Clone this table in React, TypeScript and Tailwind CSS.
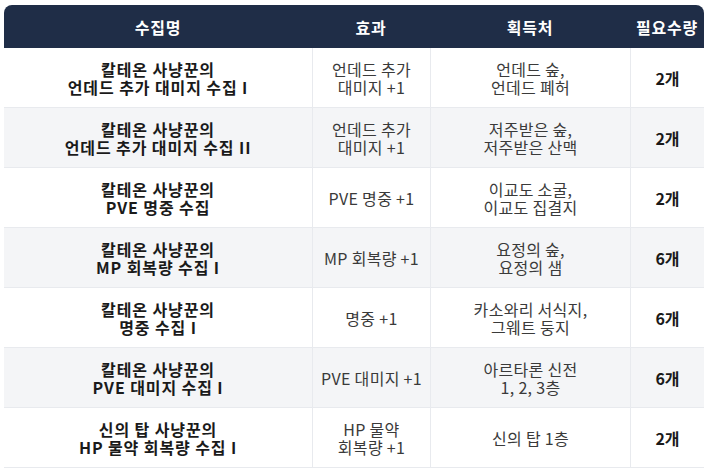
import React from "react";

interface Row {
  name: [string, string];
  effect: string[];
  source: string[];
  count: string;
}

const rows: Row[] = [
  { name: ["칼테온 사냥꾼의", "언데드 추가 대미지 수집 I"], effect: ["언데드 추가", "대미지 +1"], source: ["언데드 숲,", "언데드 폐허"], count: "2개" },
  { name: ["칼테온 사냥꾼의", "언데드 추가 대미지 수집 II"], effect: ["언데드 추가", "대미지 +1"], source: ["저주받은 숲,", "저주받은 산맥"], count: "2개" },
  { name: ["칼테온 사냥꾼의", "PVE 명중 수집"], effect: ["PVE 명중 +1"], source: ["이교도 소굴,", "이교도 집결지"], count: "2개" },
  { name: ["칼테온 사냥꾼의", "MP 회복량 수집 I"], effect: ["MP 회복량 +1"], source: ["요정의 숲,", "요정의 샘"], count: "6개" },
  { name: ["칼테온 사냥꾼의", "명중 수집 I"], effect: ["명중 +1"], source: ["카소와리 서식지,", "그웨트 둥지"], count: "6개" },
  { name: ["칼테온 사냥꾼의", "PVE 대미지 수집 I"], effect: ["PVE 대미지 +1"], source: ["아르타론 신전", "1, 2, 3층"], count: "6개" },
  { name: ["신의 탑 사냥꾼의", "HP 물약 회복량 수집 I"], effect: ["HP 물약", "회복량 +1"], source: ["신의 탑 1층"], count: "2개" },
];

const cols = "grid grid-cols-[308px_118px_200px_74px]";

// one text block per cell, lines split with <br />
const Lines = ({ lines }: { lines: string[] }) => (
  <p>
    {lines.map((l, i) => (
      <React.Fragment key={i}>
        {i > 0 && <br />}
        {l}
      </React.Fragment>
    ))}
  </p>
);

export default function App() {
  return (
    <div className="w-[708px] h-[472px] bg-white pt-[5px] pl-[4px]" style={{ fontFamily: '"Noto Sans CJK KR", "Noto Sans", sans-serif' }}>
      <div className="w-[700px]">
        <div className={`${cols} h-[43px] bg-[#1f2d47] rounded-t-[8px] text-white font-bold text-[16px] tracking-[0.8px]`}>
          <div className="flex items-center justify-center">수집명</div>
          <div className="flex items-center justify-center">효과</div>
          <div className="flex items-center justify-center">획득처</div>
          <div className="flex items-center justify-center">필요수량</div>
        </div>
        {rows.map((r, i) => (
          <div
            key={i}
            className={`${cols} h-[60px] border-b border-[#e8eaee] text-[16px] leading-[18px] text-center ${i % 2 === 1 ? "bg-[#f4f5f7]" : "bg-white"}`}
          >
            <div className="flex items-center justify-center font-bold text-[#1a1a1a] tracking-[0.9px]">
              <Lines lines={r.name} />
            </div>
            <div className="flex items-center justify-center border-l border-[#e8eaee] text-[#3a3a3a] tracking-[0.3px]">
              <Lines lines={r.effect} />
            </div>
            <div className="flex items-center justify-center border-l border-[#e8eaee] text-[#3a3a3a] tracking-[0.3px]">
              <Lines lines={r.source} />
            </div>
            <div className="flex items-center justify-center border-l border-[#e8eaee] font-bold text-[#1a1a1a]">
              {r.count}
            </div>
          </div>
        ))}
      </div>
    </div>
  );
}
